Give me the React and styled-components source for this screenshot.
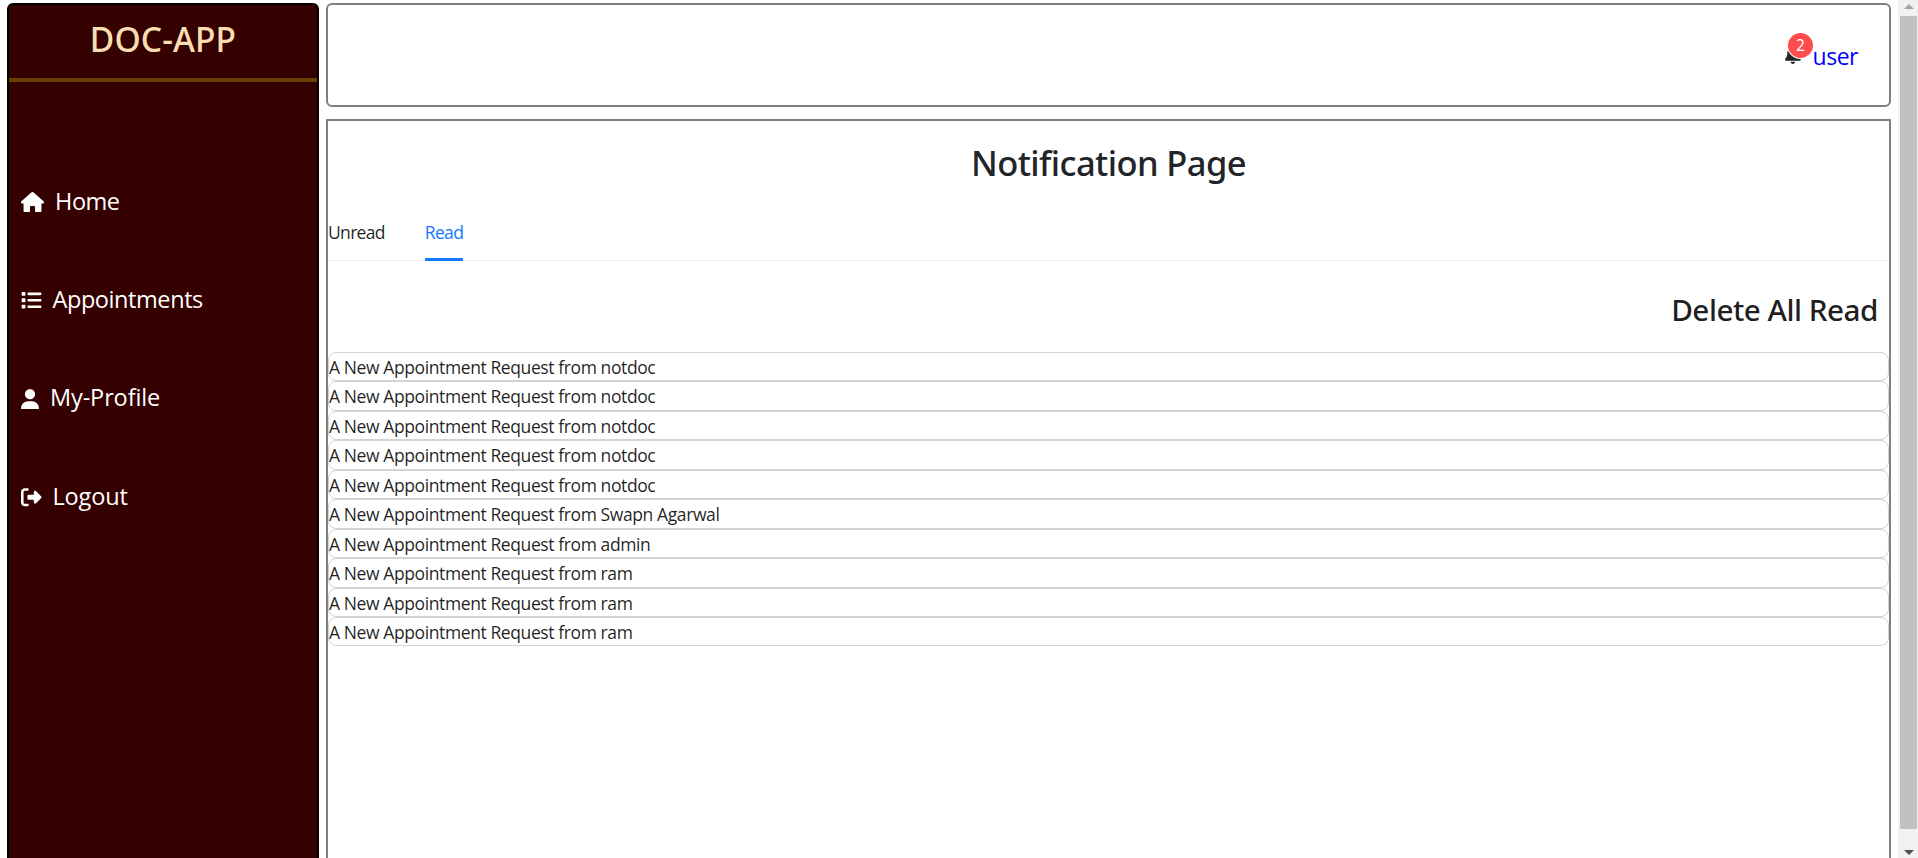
import React from "react";
import styled, { createGlobalStyle } from "styled-components";
import { FaHouse, FaList, FaUser, FaRightFromBracket, FaBell } from "react-icons/fa6";

const GlobalStyle = createGlobalStyle`
  *, *::before, *::after { box-sizing: border-box; }
  body {
    margin: 0;
    background: #fff;
    color: #212529;
    font-family: "Open Sans", "Noto Sans", sans-serif;
    overflow: hidden;
  }
  h1, h2, p, ul { margin: 0; padding: 0; }
`;

const Shell = styled.div`
  display: flex;
  height: 858px;
  overflow: hidden;
  padding-left: 7px;
`;

const Sidebar = styled.aside`
  width: 312px;
  flex: none;
  height: 1000px;
  margin: 3px 7px 0 0;
  border: 2px solid #000;
  border-radius: 6px;
  background: #340000;
`;

const Brand = styled.h1`
  height: 77px;
  padding-top: 1px;
  border-bottom: 4px solid #664100;
  text-align: center;
  color: #f9deb1;
  font: 550 33.5px/66px "Noto Sans", sans-serif;
  letter-spacing: 0.1px;
`;

const Nav = styled.nav`
  display: flex;
  flex-direction: column;
  padding: 69.6px 0 0 12px;
`;

const NavLink = styled.a`
  display: flex;
  align-items: center;
  height: 98.3px;
  color: #fff;
  font-size: 23.5px;
  line-height: 36px;
  letter-spacing: ${(p) => p.$tracking || 0}px;

  svg {
    flex: none;
    width: ${(p) => p.$iconWidth}px;
    height: 20.5px;
    margin: 3px 11px 0 0;
  }
`;

const Main = styled.main`
  flex: 1;
  display: flex;
  flex-direction: column;
  gap: 12px;
  padding-top: 3px;
`;

const Header = styled.header`
  display: flex;
  flex: none;
  align-items: center;
  justify-content: flex-end;
  height: 104px;
  padding-right: 31px;
  border: 2px solid #808080;
  border-radius: 6px;
`;

const Bell = styled.span`
  position: relative;
  display: flex;
  margin-right: 12px;

  svg {
    width: 15.75px;
    height: 18px;
  }
`;

const Count = styled.sup`
  position: absolute;
  top: -13.5px;
  left: 3px;
  width: 25px;
  height: 25px;
  border-radius: 50%;
  background: #ff4d4f;
  box-shadow: 0 0 0 1px #fff;
  color: #fff;
  font-size: 15.5px;
  line-height: 25px;
  text-align: center;
`;

const UserLink = styled.a`
  padding-top: 2px;
  color: #0000ff;
  font-size: 23px;
  line-height: 36px;
  letter-spacing: -0.5px;
`;

const Content = styled.section`
  flex: none;
  height: 900px;
  border: 2px solid #808080;
`;

const PageTitle = styled.h1`
  padding-top: 21px;
  margin-bottom: 19px;
  text-align: center;
  font: 500 34.5px/42px "Noto Sans", sans-serif;
  letter-spacing: -0.58px;
`;

const Tabs = styled.div`
  display: flex;
  gap: 40px;
  height: 58px;
  border-bottom: 1px solid #f0f0f0;
`;

const Tab = styled.div`
  height: 58px;
  border-bottom: 3px solid ${(p) => (p.$active ? "#1677ff" : "transparent")};
  color: ${(p) => (p.$active ? "#1677ff" : "rgba(0, 0, 0, 0.88)")};
  font-size: 17.5px;
  line-height: 58px;
  letter-spacing: -0.68px;
`;

const DeleteAll = styled.h2`
  padding: 30px 11px 23px;
  text-align: right;
  color: rgba(0, 0, 0, 0.88);
  font: 500 29.7px/38px "Noto Sans", sans-serif;
  letter-spacing: -0.5px;
`;

const Row = styled.div`
  height: 29.45px;
  border: 1px solid #d3d3d3;
  border-radius: 8px;
  color: rgba(0, 0, 0, 0.88);
  font-size: 17.5px;
  line-height: 29px;
  letter-spacing: -0.4px;
  white-space: nowrap;
`;

const Scrollbar = styled.div`
  display: flex;
  flex-direction: column;
  justify-content: space-between;
  width: 20px;
  flex: none;
  margin-left: 7px;
  padding: 4px 1px 3px 2px;
  background: #f1f1f1;
`;

const Arrow = styled.span`
  align-self: center;
  border: solid transparent;
  border-width: ${(p) => (p.$down ? "5px 5px 0" : "0 5px 5px")};
  border-${(p) => (p.$down ? "top" : "bottom")}-color: ${(p) => (p.$down ? "#505050" : "#a3a3a3")};
`;

const Thumb = styled.div`
  flex: 1;
  margin: 7px 0 21px;
  background: #c1c1c1;
`;

const links = [
  { label: "Home", Icon: FaHouse, iconWidth: 23, tracking: -0.45 },
  { label: "Appointments", Icon: FaList, iconWidth: 20.5, tracking: -0.42 },
  { label: "My-Profile", Icon: FaUser, iconWidth: 18, tracking: -0.12 },
  { label: "Logout", Icon: FaRightFromBracket, iconWidth: 20.5, tracking: -0.15 },
];

const senders = [
  "notdoc", "notdoc", "notdoc", "notdoc", "notdoc",
  "Swapn Agarwal", "admin", "ram", "ram", "ram",
];

export default function App() {
  return (
    <>
      <GlobalStyle />
      <Shell>
        <Sidebar>
          <Brand>DOC-APP</Brand>
          <Nav>
            {links.map(({ label, Icon, iconWidth, tracking }) => (
              <NavLink key={label} $iconWidth={iconWidth} $tracking={tracking}>
                <Icon />
                {label}
              </NavLink>
            ))}
          </Nav>
        </Sidebar>
        <Main>
          <Header>
            <Bell>
              <FaBell />
              <Count>2</Count>
            </Bell>
            <UserLink>user</UserLink>
          </Header>
          <Content>
            <PageTitle>Notification Page</PageTitle>
            <Tabs>
              <Tab>Unread</Tab>
              <Tab $active>Read</Tab>
            </Tabs>
            <DeleteAll>Delete All Read</DeleteAll>
            {senders.map((name, i) => (
              <Row key={i}>A New Appointment Request from {name}</Row>
            ))}
          </Content>
        </Main>
        <Scrollbar>
          <Arrow />
          <Thumb />
          <Arrow $down />
        </Scrollbar>
      </Shell>
    </>
  );
}
